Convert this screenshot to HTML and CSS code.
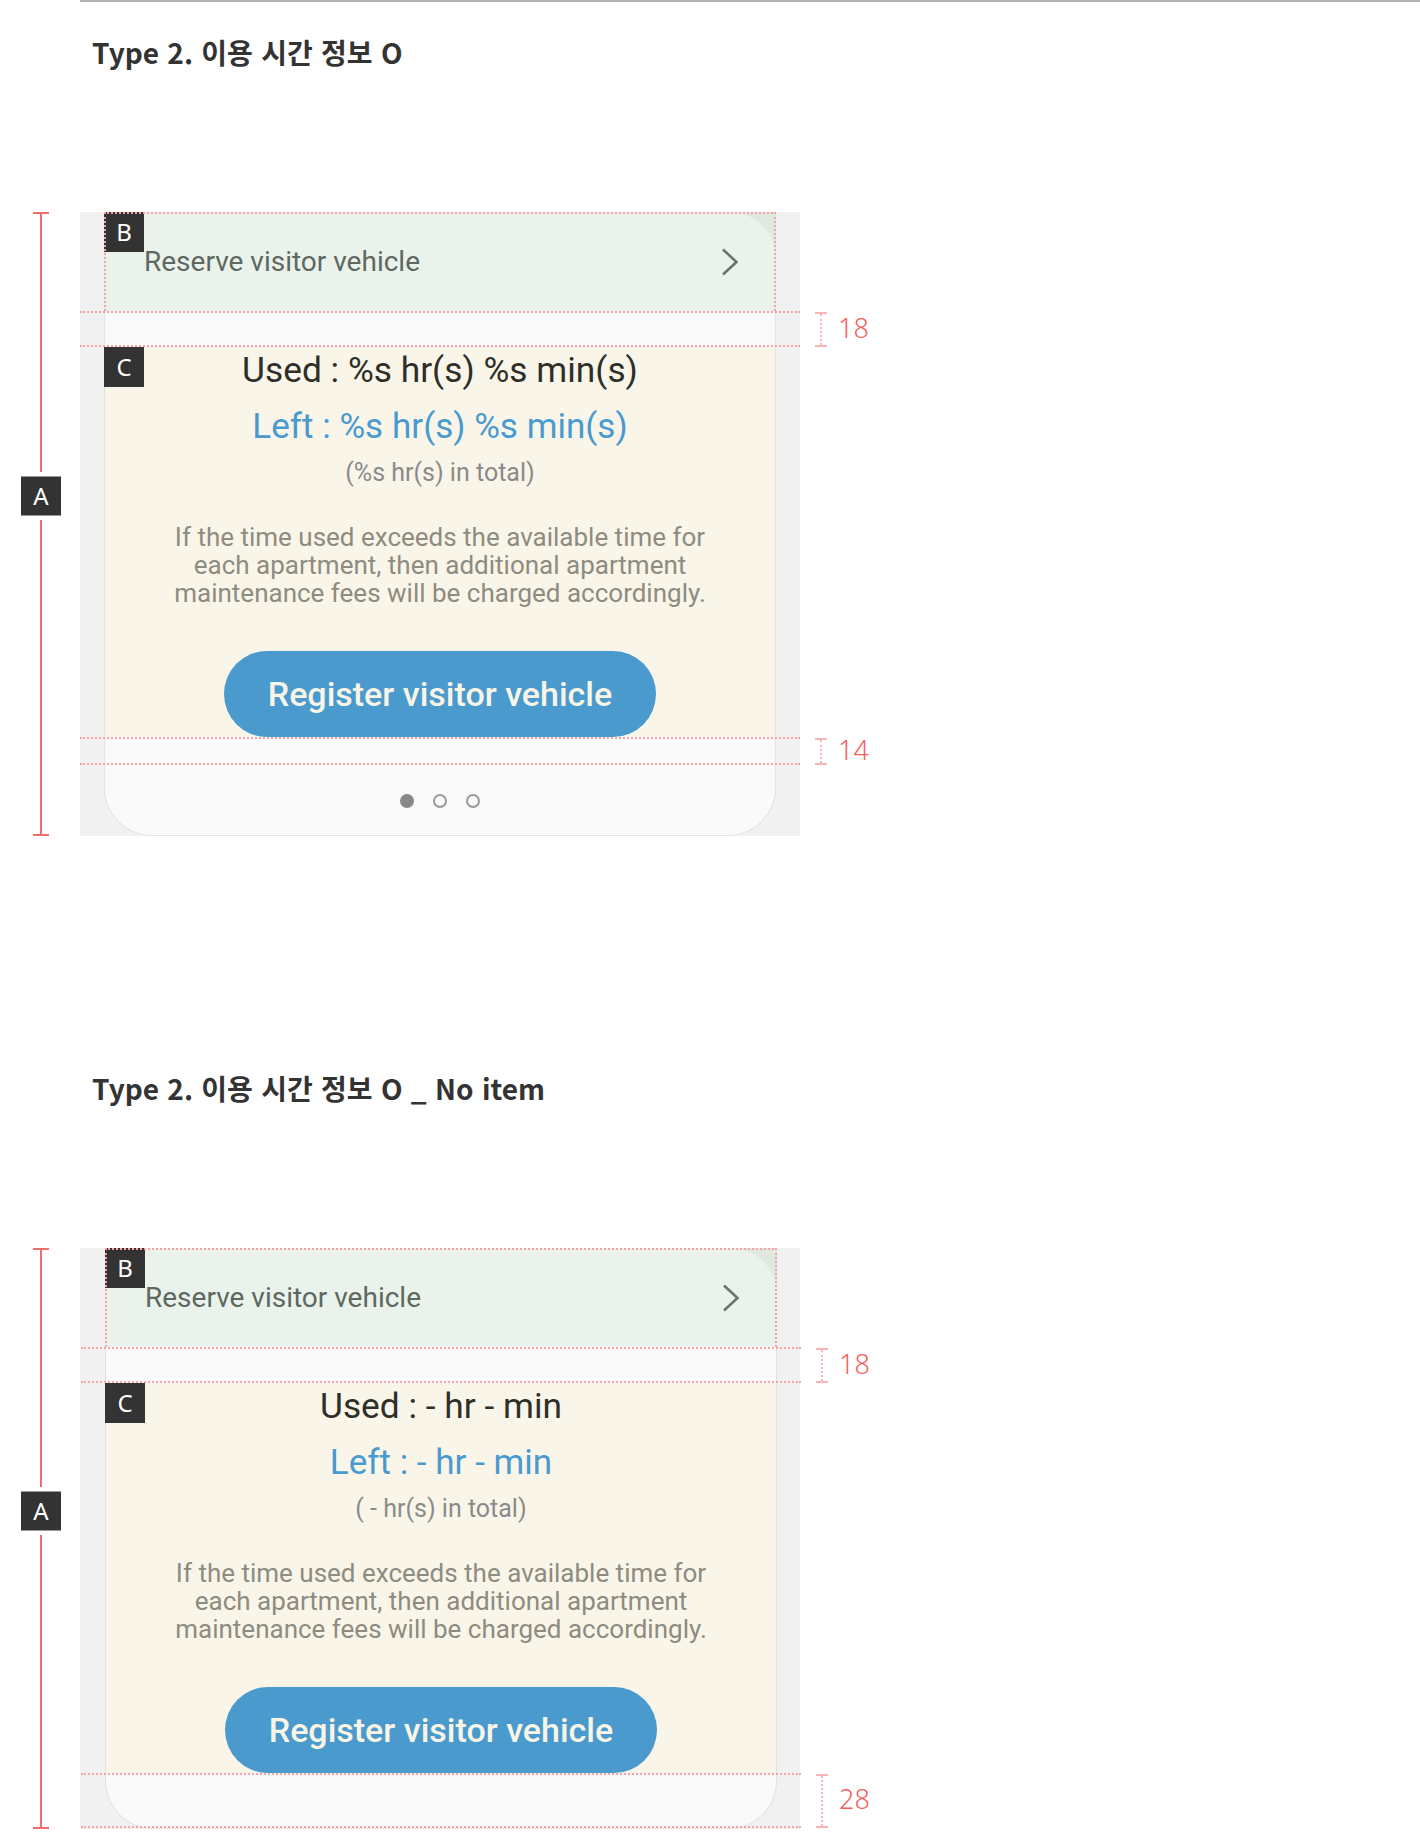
FILE: index.html
```html
<!DOCTYPE html>
<html lang="ko">
<head>
<meta charset="utf-8">
<title>Type 2</title>
<link rel="stylesheet" href="styles.css">
</head>
<body>
<div class="topline"></div>

<section class="spec spec-first">
  <h2 class="spec-title">Type 2. 이용 시간 정보 O</h2>
  <div class="spec-row">
    <div class="dim-a"><span class="badge badge-a">A</span></div>
    <div class="canvas">
      <div class="phone">
        <div class="zone-b">
          <div class="zone-b-surface">
            <span class="reserve">Reserve visitor vehicle</span>
            <svg class="chevron" width="18" height="28" viewBox="0 0 18 28"><polyline points="2,1.5 15.5,14 2,26.5" fill="none" stroke="#6b756b" stroke-width="2.6" stroke-linejoin="miter"/></svg>
          </div>
          <span class="badge badge-b">B</span>
        </div>
        <div class="gap gap-18"><div class="measure"><span class="ibeam"></span><span class="measure-num">18</span></div></div>
        <div class="zone-c">
          <span class="badge badge-c">C</span>
          <div class="used">Used : %s hr(s) %s min(s)</div>
          <div class="left">Left : %s hr(s) %s min(s)</div>
          <div class="total">(%s hr(s) in total)</div>
          <p class="note">If the time used exceeds the available time for<br>each apartment, then additional apartment<br>maintenance fees will be charged accordingly.</p>
          <div class="btn">Register visitor vehicle</div>
        </div>
        <div class="gap gap-14"><div class="measure"><span class="ibeam"></span><span class="measure-num">14</span></div></div>
        <div class="dots">
          <span class="dot dot-on"></span>
          <span class="dot"></span>
          <span class="dot"></span>
        </div>
      </div>
    </div>
  </div>
</section>

<section class="spec spec-second">
  <h2 class="spec-title">Type 2. 이용 시간 정보 O _ No item</h2>
  <div class="spec-row">
    <div class="dim-a"><span class="badge badge-a">A</span></div>
    <div class="canvas">
      <div class="phone phone-shift">
        <div class="zone-b">
          <div class="zone-b-surface">
            <span class="reserve">Reserve visitor vehicle</span>
            <svg class="chevron" width="18" height="28" viewBox="0 0 18 28"><polyline points="2,1.5 15.5,14 2,26.5" fill="none" stroke="#6b756b" stroke-width="2.6" stroke-linejoin="miter"/></svg>
          </div>
          <span class="badge badge-b">B</span>
        </div>
        <div class="gap gap-18"><div class="measure"><span class="ibeam"></span><span class="measure-num">18</span></div></div>
        <div class="zone-c">
          <span class="badge badge-c">C</span>
          <div class="used">Used : - hr - min</div>
          <div class="left">Left : - hr - min</div>
          <div class="total">( - hr(s) in total)</div>
          <p class="note">If the time used exceeds the available time for<br>each apartment, then additional apartment<br>maintenance fees will be charged accordingly.</p>
          <div class="btn">Register visitor vehicle</div>
        </div>
        <div class="gap gap-28"><div class="measure"><span class="ibeam"></span><span class="measure-num">28</span></div></div>
      </div>
    </div>
  </div>
</section>
</body>
</html>
```

FILE: styles.css
```css
* { box-sizing: border-box; }

html, body {
  margin: 0;
  padding: 0;
  background: #ffffff;
}

body {
  width: 1420px;
  font-family: Roboto, "Noto Sans", sans-serif;
  overflow: hidden;
}

.topline {
  height: 2px;
  margin-left: 80px;
  background: #b3b3b3;
}

.spec-title {
  margin: 30px 0 0 92px;
  font-family: "Noto Sans CJK KR", "Noto Sans", sans-serif;
  font-size: 28px;
  line-height: 40px;
  font-weight: 700;
  color: #333333;
  word-spacing: 0.5px;
}

.spec-second {
  padding-top: 202px;
}

.spec-row {
  display: flex;
  margin-top: 140px;
}

/* A dimension column */
.dim-a {
  position: relative;
  width: 80px;
  flex: none;
}
.dim-a::before {
  content: "";
  position: absolute;
  left: 40px;
  top: 0;
  bottom: 0;
  width: 2px;
  background: #f36b6b;
}
.dim-a::after {
  content: "";
  position: absolute;
  left: 33px;
  top: 0;
  bottom: 0;
  width: 16px;
  border-top: 2px solid #f36b6b;
  border-bottom: 2px solid #f36b6b;
}

.badge {
  position: absolute;
  width: 40px;
  height: 40px;
  background: #333333;
  color: #ffffff;
  font-family: "Noto Sans", sans-serif;
  font-size: 24px;
  line-height: 40px;
  text-align: center;
  z-index: 2;
}
.badge-a {
  left: 21px;
  top: calc(50% - 48px);
  box-shadow: 0 0 0 4px #ffffff;
  border-top: 1px solid #9a9a9a;
  border-bottom: 1px solid #9a9a9a;
  line-height: 38px;
}
.badge-b {
  left: 0;
  top: 0;
}
.badge-c {
  left: -1px;
  top: 0;
}

/* gray canvas */
.canvas {
  width: 720px;
  flex: none;
  background: #f1f1f1;
  padding: 0 24px;
}

.phone {
  width: 672px;
  background: #fafafa;
  border: 1px solid #e2e2e2;
  border-top: none;
  border-radius: 0 0 48px 48px;
}
.phone-shift {
  margin-left: 1px;
}

/* B zone */
.zone-b {
  position: relative;
  height: 99px;
  margin: 0 -1px;
  background: #dfe9e0;
}
.zone-b::after {
  content: "";
  position: absolute;
  inset: 0;
  border: 2px dotted #f5a3a3;
  border-bottom: none;
  pointer-events: none;
  z-index: 3;
}
.zone-b-surface {
  height: 100%;
  display: flex;
  align-items: center;
  justify-content: space-between;
  padding: 0 37px 0 40px;
  background: #e9f3eb;
  border-top-right-radius: 46px;
}
.reserve {
  font-size: 28px;
  color: #5e685f;
  line-height: 34px;
}
.chevron {
  display: block;
  flex: none;
}

/* gaps with measurements */
.gap {
  position: relative;
}
.gap::before,
.gap::after {
  content: "";
  position: absolute;
  left: -25px;
  right: -25px;
  height: 0;
  border-top: 2px dotted #f5a3a3;
}
.gap::before { top: 0; }
.gap::after { bottom: 0; }

.gap-18 { height: 36px; }
.gap-14 { height: 28px; }
.gap-28 { height: 55px; }

.measure {
  position: absolute;
  left: calc(100% + 40px);
  top: 1px;
  bottom: 0;
  display: flex;
  align-items: center;
}
.ibeam {
  position: relative;
  align-self: stretch;
  width: 12px;
  border-top: 2px solid #f9b4b4;
  border-bottom: 2px solid #f9b4b4;
}
.ibeam::before {
  content: "";
  position: absolute;
  left: 5px;
  top: 0;
  bottom: 0;
  border-left: 2px dotted #f9b4b4;
}
.measure-num {
  margin-left: 11px;
  margin-top: -4px;
  font-family: "Noto Sans", sans-serif;
  font-weight: 300;
  font-size: 27px;
  line-height: 30px;
  color: #f45d5d;
}

/* C zone */
.zone-c {
  position: relative;
  height: 390px;
  background: #f9f6e9;
  display: flex;
  flex-direction: column;
  align-items: center;
  padding-top: 2px;
  text-align: center;
}
.used {
  font-size: 35.3px;
  line-height: 42px;
  color: #2f2e28;
}
.left {
  margin-top: 14px;
  font-size: 35.1px;
  line-height: 42px;
  color: #4a9ad0;
}
.total {
  margin-top: 11px;
  font-size: 25px;
  line-height: 30px;
  color: #8a8a8a;
}
.note {
  margin: 35px 0 0;
  font-size: 26px;
  line-height: 28px;
  color: #8e8b80;
}
.btn {
  margin-top: 44px;
  width: 432px;
  height: 86px;
  flex: none;
  border-radius: 43px;
  background: #4a9acd;
  color: #f9f5e6;
  font-size: 34px;
  font-weight: 500;
  line-height: 86px;
  text-align: center;
}

/* page dots */
.dots {
  height: 70px;
  padding-top: 29px;
  display: flex;
  justify-content: center;
  gap: 19px;
}
.dot {
  width: 14px;
  height: 14px;
  border-radius: 50%;
  border: 2.5px solid #999999;
}
.dot-on {
  background: #888888;
  border-color: #888888;
}
```
